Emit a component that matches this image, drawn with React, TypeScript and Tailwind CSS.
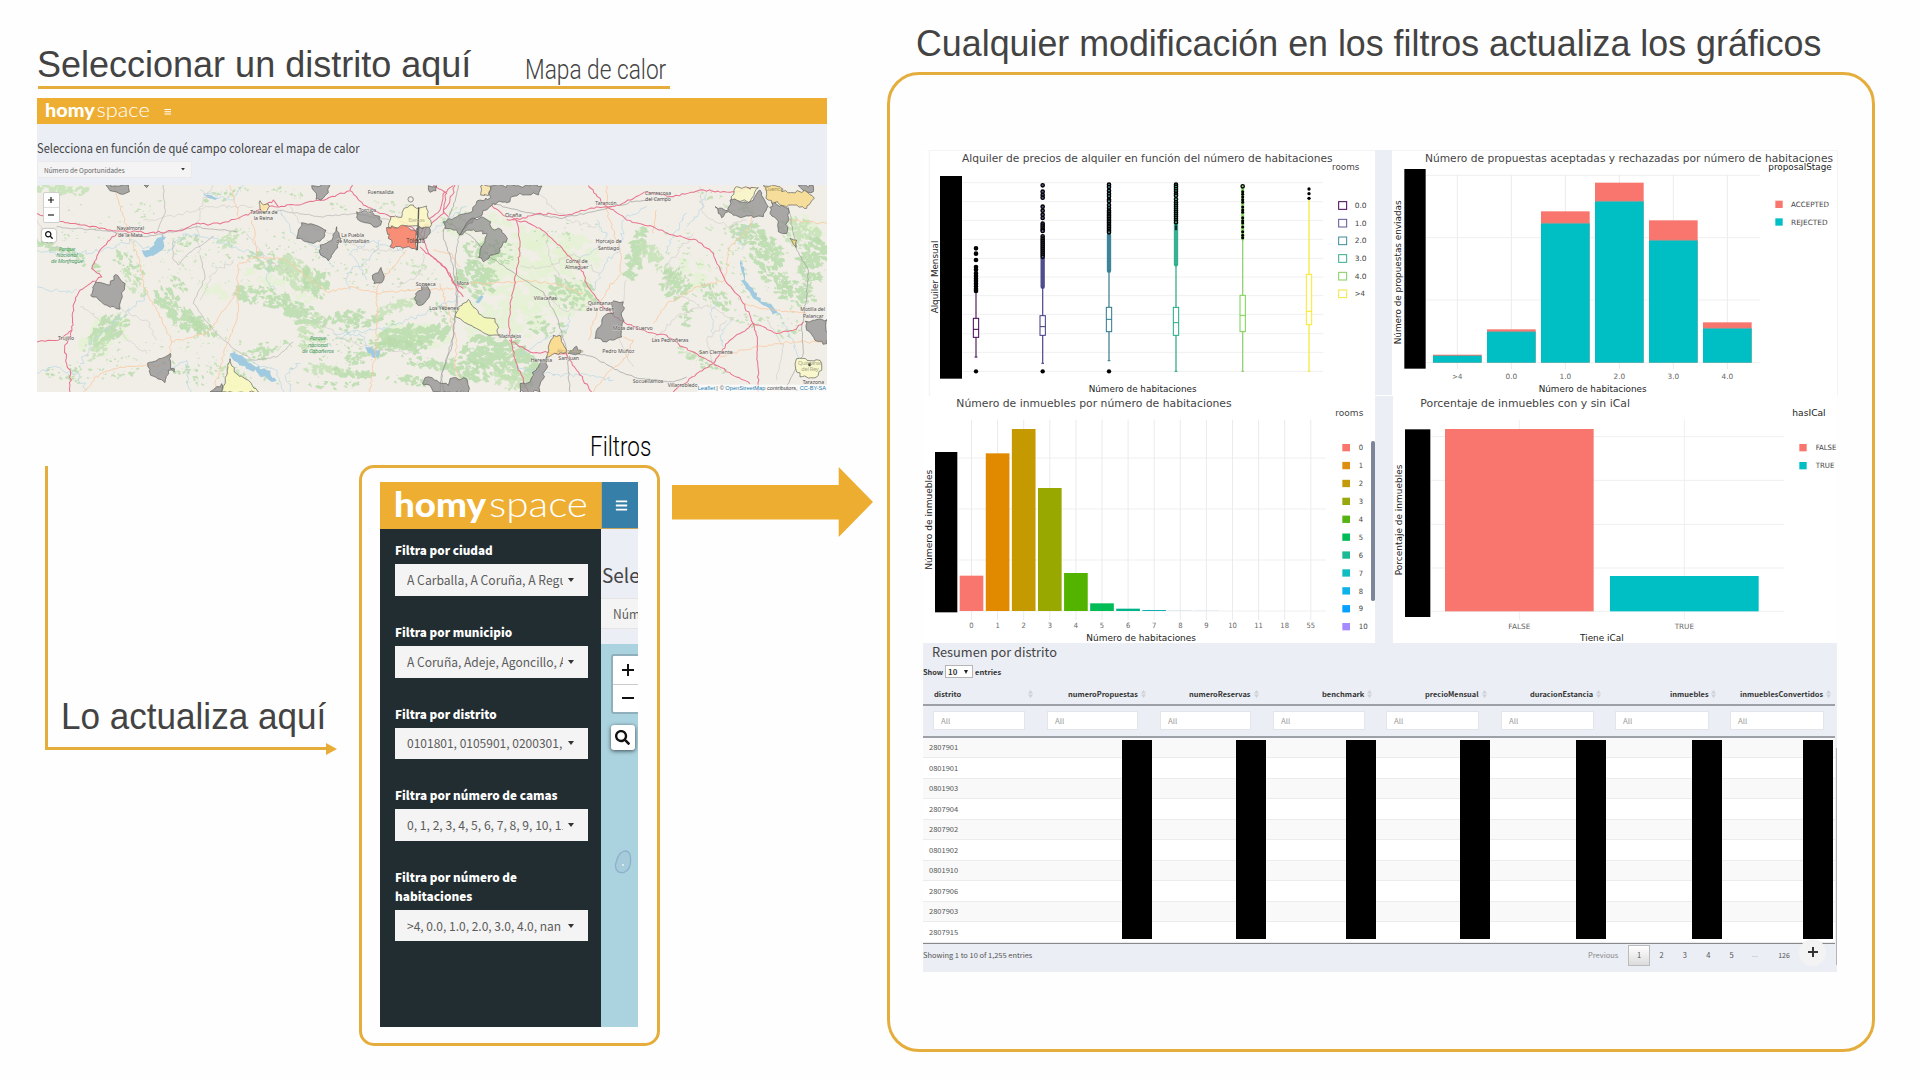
import { useLayoutEffect, useRef, useState, type ReactNode } from "react";
import { FaBars, FaSearch } from "react-icons/fa";

/* ---------- text that is condensed or stretched to a given width ---------- */
function Fit({ w, className = "", children }: { w: number; className?: string; children: ReactNode }) {
  const ref = useRef<HTMLSpanElement>(null);
  const [scale, setScale] = useState(1);
  useLayoutEffect(() => {
    if (ref.current) setScale(w / ref.current.offsetWidth);
  }, [w]);
  return (
    <span className="block shrink-0 whitespace-nowrap" style={{ width: w }}>
      <span ref={ref} className={"inline-block origin-left " + className} style={{ transform: `scaleX(${scale})` }}>
        {children}
      </span>
    </span>
  );
}

const SRC = "font-['Noto_Sans_CJK_SC','Noto_Sans',sans-serif]";

/* ---------- map helpers ---------- */
function rng(seed: number) {
  let s = seed * 9301 + 49297;
  return () => {
    s = (s * 16807 + 12345) % 2147483647;
    return s / 2147483647;
  };
}

function rough(str: string, amp: number, seed: number, closed: boolean, dx = 0) {
  const r = rng(seed);
  const pts = str.split(" ").map((p) => p.split(",").map(Number));
  const out: string[] = [];
  const n = closed ? pts.length : pts.length - 1;
  for (let i = 0; i < n; i++) {
    const a = pts[i];
    const b = pts[(i + 1) % pts.length];
    const k = Math.max(1, Math.round(Math.hypot(b[0] - a[0], b[1] - a[1]) / 9));
    for (let j = 0; j < k; j++) {
      const t = j / k;
      const jx = j ? (r() - 0.5) * amp : 0;
      const jy = j ? (r() - 0.5) * amp : 0;
      out.push(`${(a[0] + (b[0] - a[0]) * t + jx + dx).toFixed(1)},${(a[1] + (b[1] - a[1]) * t + jy).toFixed(1)}`);
    }
  }
  if (!closed) out.push(`${pts[pts.length - 1][0] + dx},${pts[pts.length - 1][1]}`);
  return "M" + out.join("L") + (closed ? "Z" : "");
}

/* irregular patches scattered inside a tilted ellipse */
function patches(cx: number, cy: number, rx: number, ry: number, deg: number, count: number, size: number, seed: number) {
  const r = rng(seed);
  const a = (deg * Math.PI) / 180;
  let d = "";
  for (let i = 0; i < count; i++) {
    const t = r() * Math.PI * 2;
    const q = Math.pow(r(), 0.6);
    const ex = Math.cos(t) * rx * q;
    const ey = Math.sin(t) * ry * q;
    const x = cx + ex * Math.cos(a) - ey * Math.sin(a);
    const y = cy + ex * Math.sin(a) + ey * Math.cos(a);
    const s = size * (0.2 + r() * 0.95);
    const tilt = a + (r() - 0.5) * 1.6;
    const pts: string[] = [];
    const m = 11;
    for (let k = 0; k < m; k++) {
      const u = (k / m) * Math.PI * 2;
      const rad = s * (0.45 + r() * 0.9);
      const px = Math.cos(u) * rad * 1.25;
      const py = Math.sin(u) * rad * 0.7;
      pts.push(`${(x + px * Math.cos(tilt) - py * Math.sin(tilt)).toFixed(1)},${(y + px * Math.sin(tilt) + py * Math.cos(tilt)).toFixed(1)}`);
    }
    d += "M" + pts.join("L") + "Z";
  }
  return d;
}

const FOREST: number[][] = [
  [190, 510, 80, 14, 5, 26, 12], [150, 680, 60, 9, 18, 18, 10], [250, 720, 60, 12, 30, 16, 9], [390, 735, 60, 22, 40, 24, 9],
  [400, 790, 50, 20, 45, 22, 9], [530, 870, 90, 28, 45, 48, 13], [600, 910, 50, 18, 35, 22, 13], [330, 925, 60, 30, -35, 46, 13],
  [290, 980, 50, 24, -40, 24, 11], [530, 790, 50, 14, 30, 12, 8], [200, 1060, 70, 22, 0, 14, 7], [560, 660, 40, 14, -20, 12, 8],
  [690, 660, 60, 18, -25, 22, 9], [690, 520, 70, 14, -15, 16, 8], [860, 520, 60, 14, 10, 10, 6], [800, 725, 70, 22, 15, 26, 11],
  [890, 760, 60, 34, 40, 44, 15], [950, 790, 50, 26, 55, 28, 14], [790, 830, 80, 24, 10, 44, 13], [900, 880, 60, 26, 20, 40, 12],
  [940, 940, 40, 50, 20, 36, 11], [800, 990, 80, 20, -20, 26, 10], [1030, 890, 60, 16, -15, 28, 12], [1090, 905, 50, 14, -8, 22, 11],
  [1190, 860, 70, 14, -20, 30, 12], [1240, 945, 100, 24, -5, 60, 17], [1200, 975, 80, 16, 5, 30, 13], [1090, 1010, 70, 16, -15, 30, 11],
  [960, 1045, 60, 12, 5, 22, 12], [1060, 1060, 60, 12, 8, 22, 12], [1290, 1030, 70, 14, 5, 26, 11], [1220, 1080, 60, 12, 5, 18, 10],
  [690, 1070, 60, 22, 20, 20, 9], [370, 1060, 60, 10, -10, 10, 8], [560, 1060, 70, 20, 30, 14, 7], [1000, 1095, 80, 10, 0, 14, 8],
  [1240, 740, 40, 18, 20, 12, 7], [1330, 880, 40, 24, 30, 16, 9], [1430, 780, 60, 46, 20, 46, 14], [1440, 700, 50, 34, 10, 26, 12],
  [1350, 600, 60, 22, -30, 12, 8], [1510, 700, 50, 34, 10, 18, 9], [1500, 1010, 100, 50, 15, 80, 17], [1400, 1050, 60, 30, 20, 34, 13],
  [1540, 1070, 60, 30, 0, 34, 13], [1720, 820, 70, 40, 20, 40, 12], [1640, 920, 60, 26, 10, 18, 10], [1910, 700, 20, 70, 15, 60, 13],
  [1970, 720, 18, 60, -40, 36, 12], [2030, 790, 40, 40, -45, 48, 11], [2150, 830, 50, 18, 40, 22, 10], [2060, 880, 16, 40, 10, 16, 9],
  [2060, 1000, 40, 20, 10, 12, 9], [2120, 1030, 60, 14, 20, 18, 9], [2240, 640, 50, 26, 10, 34, 12], [2300, 700, 50, 40, 40, 50, 13],
  [2400, 640, 60, 36, 20, 50, 12], [2440, 720, 40, 60, 10, 54, 13], [2330, 780, 60, 30, 40, 34, 11], [2400, 820, 60, 30, 10, 32, 11],
  [2210, 560, 50, 16, 20, 14, 8], [2120, 530, 40, 14, 0, 8, 7], [2360, 930, 40, 20, 0, 14, 8], [2250, 900, 40, 18, 0, 10, 7],
  [1180, 560, 60, 14, 10, 10, 7], [1010, 560, 30, 10, 10, 6, 6], [440, 560, 60, 20, 0, 10, 6], [740, 1060, 200, 40, 0, 30, 6], [560, 740, 200, 60, 20, 50, 5],
  [900, 700, 300, 60, 5, 60, 5], [1150, 760, 150, 60, 0, 30, 5], [300, 620, 150, 60, 0, 24, 5], [2200, 760, 240, 120, 20, 110, 6], [1700, 640, 100, 40, 0, 16, 5],
  [330, 1020, 160, 40, -20, 34, 5], [1080, 960, 200, 60, 0, 60, 6], [620, 960, 140, 60, 30, 34, 6],
];
const FIELDS: number[][] = [
  [1600, 760, 190, 120, 20, 170, 19], [1500, 900, 140, 60, 0, 80, 17], [1700, 700, 120, 60, 0, 60, 17], [1450, 620, 130, 50, 10, 34, 14],
  [640, 810, 40, 14, 30, 8, 18], [2080, 760, 60, 50, 30, 20, 13], [2420, 620, 60, 40, 0, 20, 13], [1240, 950, 110, 40, 0, 40, 16],
  [850, 800, 120, 60, 20, 40, 15], [310, 950, 80, 50, -30, 26, 15],
];

const RED_ROADS = [
  "111,580 160,600 240,615 330,630 450,638 545,632 585,612 660,612 720,592 800,560 905,553 960,540 1050,512 1058,495",
  "1050,512 1090,555 1140,580 1190,592 1240,625 1270,655 1285,700 1335,740 1362,790 1390,830",
  "350,640 300,690 275,745 305,770 240,810 222,850 216,930 194,985 200,1030 212,1060 210,1115",
  "111,965 175,960 215,930", "780,578 800,552 820,540 835,560",
  "1365,495 1350,540 1330,580 1280,620 1270,655",
  "1300,495 1340,520 1330,570 1345,590",
];
const RED_ROADS_E = [
  "100,497 70,520 60,570 20,610 0,640",
  "215,555 260,590 300,598 360,580 440,585 530,560 600,555 680,515 760,530 840,510 930,517 1000,502",
  "505,497 550,550 620,600 700,620 760,645 830,660 880,700 915,780 960,830 1000,910 1070,940 1120,930 1150,905",
  "260,598 320,605 380,640 430,690 480,735 500,790 540,850 600,900 680,935 740,945 790,980 880,1030 990,1090",
  "290,600 300,680 290,760 270,850 268,945 290,1030 310,1080 325,1115",
  "268,960 330,995 440,1000 470,1050 515,1115",
  "1000,910 930,960 880,1030 830,1060 760,1115",
  "1000,910 1012,960 1015,1115",
  "0,680 50,720 90,760 100,790 130,805",
];
const ORANGE_ROADS = [
  "345,495 362,560 385,640 420,720 430,800 470,870 500,930 515,965 505,1010 480,1035 360,1040 300,1060 250,1115",
  "515,965 620,940 680,860 715,800 712,735 770,710 850,715 920,770 980,815 1060,800 1130,820 1220,810 1360,805",
  "690,495 710,560 720,600", "755,600 775,710", "1130,820 1130,920 1125,1010 1110,1115", "1300,690 1350,700 1380,740",
  "715,800 710,900 680,970 660,1050 640,1115", "1220,690 1190,730 1140,780 1130,820",
];
const ORANGE_ROADS_E = [
  "560,497 560,570 600,690 605,760 560,810 530,880 505,960", "130,790 220,790 320,780 400,790 490,820",
  "700,910 740,850 830,800 915,780 930,680 990,620 1000,560", "610,950 640,960 620,1010 560,1060 520,1115",
  "970,850 1060,870 1160,880", "900,1010 1000,980 1120,965 1221,965", "710,570 700,640", "1105,600 1160,605 1221,610",
  "60,790 80,860 110,960 105,1040 135,1115",
];
const GREY_ROADS = [
  "490,495 495,580 470,640", "640,650 560,705 535,735 518,715 520,660", "600,705 615,770 580,850 640,930 700,985 760,1020 830,1010 880,965",
  "830,570 960,590 1070,580 1170,600", "1260,610 1250,690", "170,620 300,630 440,650 590,620 710,635", "1378,640 1365,720 1375,800 1360,950 1325,1060 1330,1115",
];
const GREY_ROADS_E = [
  "115,495 100,560 75,610 70,650 100,740 110,840 95,980 65,1060 60,1115", "80,605 150,645 210,710 290,765 370,815 410,890 440,990 450,1115",
  "450,995 520,1010 600,1055 660,1075 760,1085 800,1070", "215,550 310,575 420,595 540,570 640,545 760,530", "1105,560 1130,690 1165,750 1160,830 1145,930 1150,1000 1120,1060 1095,1110",
];
const MINOR_ROADS = [
  "111,600 150,680 210,700", "640,495 600,560 590,620 600,700", "350,860 440,900 470,960", "740,640 800,720 880,760", "870,560 900,610 1000,640 1090,690 1210,690",
  "940,900 1040,960 1130,990 1250,1000", "240,860 330,920 440,1000", "1270,700 1260,760 1190,800", "700,720 640,760 600,840", "430,600 520,590 620,560 760,560",
  "1590,500 1640,540 1700,600 1790,620", "1560,740 1650,740 1720,700 1800,760", "1630,820 1690,870 1780,860", "1880,780 1860,870 1850,950 1900,1040",
  "1960,960 2040,880 2130,860 2200,900", "2080,640 2010,720 2000,800 2100,860", "2100,500 2110,580 2180,620 2240,600", "2180,900 2120,960 2150,1050", "2300,900 2350,980 2330,1080", "1640,640 1650,720 1700,800",
];
const RIVERS = [
  "111,690 200,705 310,690 400,660 450,690", "500,700 560,640 640,655 720,690 800,710", "810,720 800,780 830,810", "730,495 700,540 650,530 600,510",
  "111,800 180,815 230,810", "240,1030 300,940 400,860 440,820", "260,1110 230,1060 160,1040 111,1060", "470,1060 560,1020 570,1115", "700,1000 780,1040 830,1050 850,1115",
  "1000,940 1120,930 1250,890 1380,830", "1115,1000 1080,940 1010,955", "1290,640 1350,590 1400,560", "1100,780 1050,700 1120,660 1210,690", "1050,810 1040,760 1110,720 1140,660",
  "840,570 880,640 950,680 1000,740", "870,1115 860,1060 900,1030",
];
const RIVERS_E = [
  "520,810 560,720 600,690 610,600 680,560", "530,600 560,650 520,690 460,720", "300,1000 390,950 440,930 450,880", "280,1040 370,1060 480,1065 580,1080",
  "965,690 955,640 1000,600", "1090,905 1130,1000 1140,1060", "880,940 870,880 890,840", "800,620 850,560 860,520", "910,980 905,930 940,900", "740,700 760,640 800,580",
];
const GREY_AREAS = [
  "318,495 385,495 388,515 370,523 350,516 330,512", "935,497 990,497 985,518 962,540 948,538 945,515",
  "1070,575 1095,572 1120,580 1140,592 1142,615 1120,620 1095,608 1075,600", "905,608 945,615 978,630 972,652 940,670 890,655",
  "1010,620 1022,655 1005,690 985,722 962,705 960,675 985,665 1000,650", "1143,742 1153,770 1145,788 1122,790 1117,765 1135,758",
  "1280,790 1290,812 1280,840 1255,856 1243,835 1255,812", "347,763 375,790 367,830 360,867 320,855 272,825 287,785 330,795",
  "512,1000 512,1035 523,1055 505,1050 495,1087 452,1065 443,1028 478,1015",
  "1275,1072 1310,1080 1345,1095 1350,1075 1400,1075 1405,1115 1300,1115 1290,1095 1268,1090", "1250,625 1290,615 1290,640 1262,660 1250,645",
  "1285,497 1310,497 1308,512 1290,517", "665,1090 665,1115 630,1115", "432,495 446,495 440,503",
];
const GREY_AREAS_E = [
  "70,605 100,595 150,578 180,540 212,533 212,498 366,498 355,525 300,520 275,530 270,545 220,550 200,570 170,592 120,645 100,630 75,625",
  "150,598 190,592 212,605 215,625 245,630 262,655 235,700 210,705 190,725 176,712 180,690 195,655 200,640 160,628 118,645",
  "575,850 580,842 610,845 605,950 560,965 525,955 540,920 555,885 580,880", "445,1000 470,978 474,990 483,990 480,1000",
  "380,1010 380,1045 362,1085 360,1115 300,1115 300,1090 330,1085 350,1045", "885,560 925,570 930,540 990,545 1020,510 1045,560 1030,590 985,588 960,592 925,575 905,593 895,580",
  "1055,545 1105,565 1100,640 1075,635 1072,600 1050,580", "1155,903 1221,898 1221,970 1185,960 1160,930", "1135,497 1180,497 1180,515 1150,512",
];
const COLOR_AREAS: [string, string, number][] = [
  ["1212,565 1240,555 1250,565 1280,558 1285,595 1292,600 1290,622 1225,618 1165,625 1172,590 1205,592", "#fbf6c4", 0],
  ["1160,622 1220,618 1250,635 1250,690 1215,682 1170,680 1175,660 1165,655", "#f9836a", 0],
  ["690,1015 710,1060 745,1080 775,1115 665,1115 680,1065", "#f9f8bf", 0],
  ["780,542 808,560 795,580 785,575", "#fae7a8", 0],
  ["945,503 1015,503 990,545 935,540", "#f8f5c6", 1260],
  ["1030,497 1080,500 1085,515 1160,515 1183,535 1160,565 1120,555 1100,560 1045,540", "#f6dc91", 1260],
  ["182,498 212,498 205,527 182,525", "#f8e3ae", 1260],
  ["105,890 115,860 145,838 185,885 225,895 238,948 215,945 170,925", "#f3f6b5", 1260],
  ["400,945 420,945 440,995 380,1010 385,985", "#fbd98a", 1260],
  ["1130,1015 1200,1020 1205,1030 1205,1050 1190,1070 1140,1070 1127,1045", "#f8f8c9", 1260],
  ["1110,655 1130,660 1128,682", "#f4d583", 1260],
];
const TOWNS: [number, number, string, number][] = [
  [1142, 522, "Fuensalida", 78], [792, 581, "Talavera de", 82], [790, 600, "la Reina", 58], [1102, 576, "Torrijos", 52], [391, 630, "Navalmoral", 82],
  [391, 650, "de la Mata", 74], [1058, 651, "La Puebla", 68], [1058, 670, "de Montalbán", 100], [1277, 797, "Sonseca", 60], [1388, 795, "Mora", 36],
  [1332, 869, "Los Yébenes", 88], [198, 960, "Trujillo", 48], [1540, 592, "Ocaña", 50], [1818, 555, "Tarancón", 64], [1974, 525, "Carrascosa", 78],
  [1974, 544, "del Campo", 78], [1826, 670, "Horcajo de", 78], [1826, 690, "Santiago", 64], [1730, 729, "Corral de", 66], [1730, 748, "Almaguer", 70],
  [1636, 838, "Villacañas", 70], [1801, 855, "Quintanar", 76], [1801, 873, "de la Orden", 84], [1898, 929, "Mota del Cuervo", 120], [2010, 966, "Las Pedroñeras", 110],
  [1530, 953, "Madridejos", 66], [1624, 1025, "Herencia", 64], [1706, 1020, "San Juan", 62], [1855, 998, "Pedro Muñoz", 96], [2148, 1000, "San Clemente", 100],
  [1944, 1088, "Socuéllamos", 92], [2048, 1099, "Villarrobledo", 90], [2438, 873, "Motilla del", 74], [2440, 892, "Palancar", 62], [2440, 1090, "Tarazona", 64],
];

function HeatMap() {
  return (
    <svg viewBox="111 495 2370 620" preserveAspectRatio="none" className="block h-full w-full">
      <rect x="111" y="495" width="2370" height="620" fill="#f1eee8" />
      {FIELDS.map((f, i) => (
        <path key={i} d={patches(f[0], f[1], f[2], f[3], f[4], f[5], f[6], i + 400)} fill="#e2f3cf" opacity="0.65" />
      ))}
      {FOREST.map((f, i) => (
        <path key={i} d={patches(f[0], f[1], f[2] * 1.1, f[3] * 1.2, f[4], Math.round(f[5] * 1.9), f[6] * 0.75, i + 7)} fill={i % 4 === 0 ? "#c4e2b5" : "#b9dcab"} opacity="0.85" />
      ))}
      <g fill="none" stroke="#b4d6e6" strokeWidth="2">
        {RIVERS.map((r, i) => <path key={i} d={rough(r, 14, i + 3, false)} />)}
        {RIVERS_E.map((r, i) => <path key={i} d={rough(r, 14, i + 31, false, 1260)} />)}
      </g>
      <g fill="#9fcadf">
        <path d={rough("425,690 450,690 468,660 488,640 498,650 488,690 460,708 435,710", 12, 5, true)} />
        <path d={rough("690,1000 720,1005 760,1035 800,1050 830,1080 815,1085 770,1055 720,1035 700,1020", 16, 6, true)} />
        <path d={rough("1095,980 1140,990 1135,1010 1115,1010", 8, 9, true)} />
        <path d={rough("962,720 975,770 1010,830 1050,850 1080,880 1085,895 1040,860 1000,835 970,790", 12, 8, true, 1260)} />
        <path d={rough("610,520 640,530 655,535 645,540 620,530", 6, 8, true)} />
        <path d={rough("165,845 185,825 190,830 175,850", 4, 8, true, 1260)} />
      </g>
      <g fill="none" stroke="#cfcbc8" strokeWidth="1.8">
        {MINOR_ROADS.map((r, i) => <path key={i} d={rough(r, 12, i + 150, false)} />)}
      </g>
      <g fill="none" stroke="#fac9a0" strokeWidth="2.5">
        {ORANGE_ROADS.map((r, i) => <path key={i} d={rough(r, 8, i + 50, false)} />)}
        {ORANGE_ROADS_E.map((r, i) => <path key={i} d={rough(r, 8, i + 60, false, 1260)} />)}
      </g>
      <g fill="none" stroke="#9b9a98" strokeWidth="2">
        {GREY_ROADS.map((r, i) => <path key={i} d={rough(r, 5, i + 80, false)} opacity={i < 4 ? 0.7 : 0.9} />)}
        {GREY_ROADS_E.map((r, i) => <path key={i} d={rough(r, 4, i + 90, false, 1260)} />)}
      </g>
      <g fill="none" stroke="#e8728c" strokeWidth="3">
        {RED_ROADS.map((r, i) => <path key={i} d={rough(r, 7, i + 100, false)} />)}
        {RED_ROADS_E.map((r, i) => <path key={i} d={rough(r, 6, i + 120, false, 1260)} />)}
      </g>
      <g stroke="#5c5c58" strokeWidth="2">
        {GREY_AREAS.map((p, i) => <path key={i} d={rough(p, 9, i + 200, true)} fill="#8f8f8f" fillOpacity="0.75" />)}
        {GREY_AREAS_E.map((p, i) => <path key={i} d={rough(p, 10, i + 220, true, 1260)} fill="#8f8f8f" fillOpacity="0.75" />)}
        {COLOR_AREAS.map(([p, c, dx], i) => <path key={i} d={rough(p, 9, i + 240, true, dx)} fill={c} fillOpacity="0.9" strokeWidth="2" />)}
        <circle cx="1232" cy="538" r="8" fill="none" strokeWidth="2" />
        <circle cx="2429" cy="1033" r="4" fill="#222" />
        <path d="M1256 562 L1252 690" fill="none" strokeWidth="4" />
      </g>
      <g fontFamily="'Noto Sans', sans-serif" fontSize="17" fill="#4f4c4a" textAnchor="middle">
        {TOWNS.map(([x, y, t, w]) => (
          <text key={t} x={x} y={y} textLength={w} lengthAdjust="spacingAndGlyphs" stroke="#f5f2ee" strokeWidth="3" strokeOpacity="0.6" paintOrder="stroke">{t}</text>
        ))}
        <text x="1247" y="669" fontSize="21" textLength="56" lengthAdjust="spacingAndGlyphs">Toledo</text>
        <text x="1250" y="606" fill="#bdb593" textLength="50">Bargas</text>
        <text x="1710" y="998" fill="#b5a478" textLength="80">Alcázar de</text>
        <text x="2430" y="1034" fill="#aaa789" textLength="72">Quintanar</text>
        <text x="2430" y="1052" fill="#aaa789" textLength="52">del Rey</text>
        <text x="2322" y="512" fill="#a38f62" textLength="56">Cuenca</text>
        <g fontStyle="italic" fill="#4c9c68" fontSize="17">
          <text x="201" y="694" textLength="50">Parque</text>
          <text x="201" y="712" textLength="64">Nacional</text>
          <text x="201" y="730" textLength="96">de Monfragüe</text>
          <text x="954" y="960" textLength="50">Parque</text>
          <text x="954" y="979" textLength="60">nacional</text>
          <text x="954" y="997" textLength="96">de Cabañeros</text>
        </g>
      </g>
      <rect x="2092" y="1093" width="389" height="22" fill="#fff" fillOpacity="0.7" />
      <g fontFamily="'Liberation Sans', sans-serif" fontSize="17" fill="#1b7fb5">
        <text x="2093" y="1109" textLength="52" lengthAdjust="spacingAndGlyphs">Leaflet</text>
        <text x="2149" y="1109" fill="#444" textLength="23">| ©</text>
        <text x="2176" y="1109" textLength="120" lengthAdjust="spacingAndGlyphs">OpenStreetMap</text>
        <text x="2301" y="1109" fill="#444" textLength="92" lengthAdjust="spacingAndGlyphs">contributors,</text>
        <text x="2399" y="1109" textLength="79" lengthAdjust="spacingAndGlyphs">CC-BY-SA</text>
      </g>
    </svg>
  );
}

/* ---------- logo ---------- */
function Logo({ className }: { className: string }) {
  return (
    <svg viewBox="-2 -4 200 42" className={className} fill="#fff" fontFamily="Lato, sans-serif">
      <text x="0" y="25" fontSize="33.5" fontWeight="900" textLength="92" lengthAdjust="spacingAndGlyphs">homy</text>
      <text x="95" y="25" fontSize="35" fontWeight="300" textLength="99" lengthAdjust="spacingAndGlyphs">space</text>
    </svg>
  );
}

/* ---------- charts: every unit is a third of a pixel ---------- */
const DV = "'DejaVu Sans', sans-serif";

function Txt({ x, y, w, s, c = "#444", a = "start", children }: { x: number; y: number; w: number; s: number; c?: string; a?: "start" | "middle"; children: string }) {
  return (
    <text x={x} y={y} fontSize={s} fill={c} textAnchor={a} textLength={w} lengthAdjust="spacingAndGlyphs">{children}</text>
  );
}
function VTxt({ x, y, w, s, children }: { x: number; y: number; w: number; s: number; children: string }) {
  return (
    <text transform={`translate(${x} ${y}) rotate(-90)`} fontSize={s} fill="#222" textAnchor="middle" textLength={w} lengthAdjust="spacingAndGlyphs">{children}</text>
  );
}

type Box = { x: number; c: string; dark: string; hi: number; q3: number; m: number; q1: number; lo: number; thick?: [number, number]; dots: number[]; low?: boolean };
const range = (a: number, b: number, step: number) => Array.from({ length: Math.floor((b - a) / step) + 1 }, (_, i) => a + i * step);
const BOXES: Box[] = [
  { x: 288, c: "#66396f", dark: "#440154", hi: 690, q3: 775, m: 808, q1: 832, lo: 891, dots: [565, 581, 600, 621, 629, 640, 648, 656, 663, 671, 679, 687, 693], low: true },
  { x: 488, c: "#5a5796", dark: "#3c3a80", hi: 680, q3: 767, m: 800, q1: 826, lo: 910, thick: [595, 680], dots: [376, 395, 405, 413, 440, 452, 464, 474, 491, 497, 503, 509, 513, 529, ...range(536, 594, 6)], low: true },
  { x: 687, c: "#4a8796", dark: "#2a788e", hi: 630, q3: 742, m: 778, q1: 815, lo: 902, thick: [525, 632], dots: [374, 381, 392, 401, 409, 419, 424, 435, 444, ...range(452, 520, 5)], low: true },
  { x: 888, c: "#3fae8c", dark: "#22a884", hi: 612, q3: 742, m: 788, q1: 826, lo: 934, thick: [490, 613], dots: [374, 380, 387, 394, 401, 407, 418, ...range(427, 490, 6)] },
  { x: 1088, c: "#98d077", dark: "#7ad151", hi: 535, q3: 706, m: 766, q1: 815, lo: 934, thick: [385, 537], dots: [379] },
  { x: 1287, c: "#f4e94d", dark: "#fde725", hi: 420, q3: 643, m: 754, q1: 794, lo: 934, dots: [] },
];
const ROOM_LEGEND = [["0.0", "#440154"], ["1.0", "#5a5796"], ["2.0", "#3f8a9a"], ["3.0", "#35ac8b"], ["4.0", "#86cc5f"], [">4", "#f4e63a"]];

function RentChart() {
  return (
    <svg viewBox="129 270 1356 738" className="block h-full w-[452px] shrink-0 bg-white" fontFamily={DV}>
      <path d="M148 1008V271H1485" fill="none" stroke="#e7ebee" strokeWidth="2" />
      {[368, 425, 481, 538, 595, 651, 707, 763, 821, 877, 934].map((y) => <path key={y} d={`M247 ${y}H1330`} stroke="#f0f0f0" strokeWidth="3" />)}
      <rect x="180" y="348" width="66" height="608" fill="#000" />
      {BOXES.map((b) => (
        <g key={b.x} stroke={b.c} strokeWidth="4" fill="none">
          <path d={`M${b.x} ${b.hi}V${b.q3}M${b.x} ${b.q1}V${b.lo}M${b.x - 4} ${b.lo}h8`} />
          <rect x={b.x - 8} y={b.q3} width="16" height={b.q1 - b.q3} fill="#fff" stroke={b.dark} strokeWidth="3" />
          <path d={`M${b.x - 8} ${b.m}h16`} stroke={b.dark} strokeWidth="3" />
          {b.thick && <path d={`M${b.x} ${b.thick[0]}V${b.thick[1]}`} strokeWidth={b.x > 1000 ? 9 : 13} strokeLinecap="round" stroke={b.dark} opacity="0.9" />}
          {b.dots.map((y) => <circle key={y} cx={b.x} cy={y} r="5" stroke="#000" strokeWidth="4" fill={b.x === 288 ? "#000" : b.c} />)}
          {b.low && <circle cx={b.x} cy="934" r="6.5" fill="#000" stroke="none" />}
        </g>
      ))}
      {[395, 403, 411, 419, 427, 441, 450, 457, 473, 482, 489, 501, 515, 526, 533].map((y) => <circle key={y} cx="1088" cy={y} r="4.5" fill="#000" />)}
      {[500, 507].map((y) => <circle key={y} cx="888" cy={y} r="4" fill="#123" />)}
      {[387, 401, 415].map((y) => <circle key={y} cx="1287" cy={y} r="5" fill="#000" />)}
      <Txt x={246} y={307} w={1112} s={32}>Alquiler de precios de alquiler en función del número de habitaciones</Txt>
      <Txt x={1356} y={329} w={82} s={26}>rooms</Txt>
      {ROOM_LEGEND.map(([t, c], i) => (
        <g key={t}>
          <rect x="1376" y={425 + i * 53} width="24" height="23" fill="#fff" stroke={c} strokeWidth="3" />
          <Txt x={1424} y={444 + i * 53} w={t === ">4" ? 31 : 36} s={22}>{t}</Txt>
        </g>
      ))}
      <VTxt x={174} y={651} w={218} s={26}>Alquiler Mensual</VTxt>
      <Txt x={626} y={996} w={324} s={26} c="#222">Número de habitaciones</Txt>
    </svg>
  );
}

const PROPOSALS: [string, number, number, number, number][] = [
  [">4", 262, 884, 887, 30], ["0.0", 424, 808, 815, 35], ["1.0", 586, 454, 490, 35], ["2.0", 748, 368, 424, 35], ["3.0", 910, 481, 541, 35], ["4.0", 1072, 787, 805, 35],
];

function ProposalChart() {
  return (
    <svg viewBox="66 270 1338 738" className="block h-full w-[446px] shrink-0 bg-white" fontFamily={DV}>
      <path d="M66 271H1403V1008" fill="none" stroke="#e9ecef" strokeWidth="2" />
      {[346, 533, 720, 908].map((y) => <path key={y} d={`M168 ${y}H1170`} stroke="#efefef" strokeWidth="3" />)}
      {PROPOSALS.map(([t, x, top, mid, w]) => (
        <g key={t}>
          <path d={`M${x} 344V928`} stroke="#ebebeb" strokeWidth="3" />
          <rect x={x - 73} y={top} width="146" height={908 - top} fill="#f8766d" />
          <rect x={x - 73} y={mid} width="146" height={908 - mid} fill="#00bfc4" />
          {mid - top > 5 && <path d={`M${x - 73} ${mid}h146`} stroke="#8fa0a0" strokeWidth="2" />}
          <Txt x={x} y={958} w={w} s={22} c="#666" a="middle">{t}</Txt>
        </g>
      ))}
      <rect x="103" y="327" width="64" height="599" fill="#000" />
      <Txt x={165} y={307} w={1224} s={32}>Número de propuestas aceptadas y rechazadas por número de habitaciones</Txt>
      <Txt x={1195} y={329} w={190} s={26} c="#222">proposalStage</Txt>
      <rect x="1216" y="422" width="22" height="22" fill="#f8766d" />
      <Txt x={1263} y={441} w={114} s={22}>ACCEPTED</Txt>
      <rect x="1216" y="475" width="22" height="22" fill="#00bfc4" />
      <Txt x={1263} y={494} w={110} s={22}>REJECTED</Txt>
      <VTxt x={94} y={637} w={432} s={26}>Número de propuestas enviadas</VTxt>
      <Txt x={506} y={996} w={324} s={26} c="#222">Número de habitaciones</Txt>
    </svg>
  );
}

const ROOMS: [string, number, string][] = [
  ["0", 557, "#f8766d"], ["1", 190, "#e18a00"], ["2", 117, "#c49a00"], ["3", 294, "#99a800"], ["4", 549, "#53b400"], ["5", 640, "#00bc56"], ["6", 656, "#00b48a"],
  ["7", 660, "#10b0b0"], ["8", 662, "#b8dbe8"], ["9", 662, "#c9e0f2"], ["10", 663, "#eee"], ["11", 663, "#eee"], ["18", 663, "#eee"], ["55", 663, "#eee"],
];
const ROOM_KEYS = ["#f8766d", "#dd8d10", "#c49a0a", "#99a80c", "#53b414", "#00bc56", "#1cba94", "#12bdc2", "#0cb3e8", "#06a1ff", "#a58aff"];

function RoomsChart() {
  return (
    <svg viewBox="129 18 1356 741" className="block h-full w-[452px] shrink-0 bg-white" fontFamily={DV}>
      {[204, 357, 510, 663].map((y) => <path key={y} d={`M236 ${y}H1338`} stroke="#efefef" strokeWidth="3" />)}
      {ROOMS.map(([t, top, c], i) => {
        const x = 274.5 + i * 78.3;
        return (
          <g key={t}>
            <path d={`M${x} 89V690`} stroke="#ebebeb" strokeWidth="3" />
            <rect x={x - 35.5} y={top} width="71" height={663 - top} fill={c} />
            <Txt x={x} y={714} w={t.length * 13} s={22} c="#666" a="middle">{t}</Txt>
          </g>
        );
      })}
      <rect x="165" y="186" width="67" height="481" fill="#000" />
      <Txt x={229} y={52} w={826} s={32}>Número de inmuebles por número de habitaciones</Txt>
      <Txt x={1366} y={78} w={84} s={26}>rooms</Txt>
      {ROOM_KEYS.map((c, i) => (
        <g key={c}>
          <rect x="1387" y={162 + i * 53.7} width="23" height="22" fill={c} />
          <Txt x={1436} y={181 + i * 53.7} w={i === 10 ? 27 : 13} s={22}>{String(i)}</Txt>
        </g>
      ))}
      <rect x="1473" y="153" width="12" height="480" rx="5" fill="#7b869b" />
      <VTxt x={155} y={389} w={300} s={26}>Número de inmuebles</VTxt>
      <Txt x={619} y={752} w={329} s={26} c="#222">Número de habitaciones</Txt>
    </svg>
  );
}

function ICalChart() {
  return (
    <svg viewBox="69 18 1332 741" className="block h-full w-[444px] shrink-0 bg-white" fontFamily={DV}>
      {[140, 271, 403, 534, 664].map((y) => <path key={y} d={`M184 ${y}H1242`} stroke="#efefef" strokeWidth="3" />)}
      <path d="M448 89V690M943 89V690" stroke="#efefef" strokeWidth="3" />
      <rect x="225" y="117" width="446" height="547" fill="#f8766d" />
      <rect x="720" y="558" width="446" height="106" fill="#00bfc4" />
      <rect x="105" y="118" width="76" height="563" fill="#000" />
      <Txt x={151} y={52} w={629} s={32}>Porcentaje de inmuebles con y sin iCal</Txt>
      <Txt x={1267} y={78} w={100} s={26} c="#222">hasICal</Txt>
      <rect x="1288" y="162" width="22" height="22" fill="#f8766d" />
      <Txt x={1337} y={181} w={62} s={22}>FALSE</Txt>
      <rect x="1288" y="216" width="22" height="22" fill="#00bfc4" />
      <Txt x={1337} y={235} w={56} s={22}>TRUE</Txt>
      <Txt x={448} y={716} w={66} s={22} c="#666" a="middle">FALSE</Txt>
      <Txt x={943} y={716} w={58} s={22} c="#666" a="middle">TRUE</Txt>
      <VTxt x={97} y={390} w={332} s={26}>Porcentaje de inmuebles</VTxt>
      <Txt x={630} y={752} w={131} s={26} c="#222">Tiene iCal</Txt>
    </svg>
  );
}

/* ---------- summary table ---------- */
const COLS = "grid w-[912px] grid-cols-[113.5px_113px_113px_113.5px_114.5px_114.5px_115px_115px]";
const HEADERS: [string, number][] = [
  ["distrito", 27], ["numeroPropuestas", 70], ["numeroReservas", 61.5], ["benchmark", 42], ["precioMensual", 54], ["duracionEstancia", 63.5], ["inmuebles", 38.5], ["inmueblesConvertidos", 83],
];
const DISTRICTS = ["2807901", "0801901", "0801903", "2807904", "2807902", "0801902", "0801910", "2807906", "2807903", "2807915"];
const MASKS = ["left-[198.5px]", "left-[312.5px]", "left-[423px]", "left-[536.5px]", "left-[653px]", "left-[768.5px]", "left-[879.5px]"];

function SortMark() {
  return (
    <svg viewBox="0 0 5 8" className="h-[8px] w-[5px]" fill="#cfd3d9">
      <path d="M2.5 0L5 3.4H0zM2.5 8L0 4.6h5z" />
    </svg>
  );
}

function Summary() {
  return (
    <section className={"h-[329px] w-[914px] bg-[#ebeef4] text-[#555] " + SRC}>
      <div className="h-[17px] pl-[9px] text-[12.5px] leading-[18px] text-[#444]"><Fit w={125}>Resumen por distrito</Fit></div>
      <div className="flex h-[23.5px] items-center text-[7px] font-bold leading-[10px] text-[#333]">
        <Fit w={20}>Show</Fit>
        <div className="ml-[2px] flex h-[13px] w-[28px] items-center justify-between border border-[#b5b5b5] bg-white px-[2px]">
          <Fit w={9}>10</Fit>
          <svg viewBox="0 0 4 4" className="mr-[2px] h-[4px] w-[4px]"><path d="M0 0h4L2 4z" fill="#222" /></svg>
        </div>
        <div className="ml-[1.5px]"><Fit w={26}>entries</Fit></div>
      </div>
      <div className={COLS + " h-[20px] items-center text-[7px] font-bold leading-[10px] text-[#333]"}>
        {HEADERS.map(([t, w], i) => (
          <div key={t} className={i === 0 ? "flex items-center justify-between pl-[10.5px] pr-[4px]" : "flex items-center justify-end gap-[3px] pr-[4px]"}>
            <Fit w={w}>{t}</Fit>
            <SortMark />
          </div>
        ))}
      </div>
      <div className={COLS + " h-[34px] items-center border-y-2 border-[#9da0a7]"}>
        {HEADERS.map(([t]) => (
          <div key={t} className="pl-[10px] pr-[11.5px]">
            <div className="flex h-[19px] items-center border border-[#e3e5ea] bg-white pl-[7px] text-[7px] leading-[10px] text-[#999]"><Fit w={9}>All</Fit></div>
          </div>
        ))}
      </div>
      <div className="relative flex">
        <div className="w-[912px] border-b border-[#87898d]">
          {DISTRICTS.map((d, i) => (
            <div key={d} className={(i % 2 ? "bg-white" : "bg-[#f9f9f9]") + " flex h-[20.5px] items-center border-b border-[#ececec] pl-[6px] text-[7px] leading-[10px]"}>
              <Fit w={29}>{d}</Fit>
            </div>
          ))}
        </div>
        {MASKS.map((m) => <div key={m} className={"absolute top-[2.5px] h-[199px] w-[30px] bg-black " + m} />)}
        <div className="absolute right-0 top-[10px] h-[217px] w-[1.5px] bg-[#b4b4b8]" />
      </div>
      <div className="flex h-[23.5px] items-center text-[7px] leading-[10px]">
        <Fit w={109.5}>Showing 1 to 10 of 1,255 entries</Fit>
        <div className="ml-[555.5px] flex items-center">
          <Fit w={30} className="text-[#888]">Previous</Fit>
          <div className="ml-[10px] flex h-[21px] w-[22px] items-center justify-center border border-[#bbb] bg-linear-to-b from-white to-[#dcdcdc] text-[7.5px]">1</div>
          {["2", "3", "4", "5"].map((n) => <div key={n} className="w-[23.3px] text-center text-[7.5px]">{n}</div>)}
          <div className="w-[23px] text-center font-['Liberation_Sans',sans-serif] text-[#999]">...</div>
          <div className="ml-[12px] w-[13px]"><Fit w={12}>126</Fit></div>
        </div>
        <div className="relative -top-[3px] ml-[8px] flex size-[27px] items-center justify-center rounded-full bg-[#f3f3f4]">
          <svg viewBox="0 0 10 10" className="size-[10px]"><path d="M5 0v10M0 5h10" stroke="#333" strokeWidth="2" /></svg>
        </div>
      </div>
    </section>
  );
}

/* ---------- sidebar filters ---------- */
const FILTERS: { label: [string, number][]; value: string; w: number }[] = [
  { label: [["Filtra por ciudad", 98]], value: "A Carballa, A Coruña, A Regueira", w: 181 },
  { label: [["Filtra por municipio", 117.5]], value: "A Coruña, Adeje, Agoncillo, Agüimes", w: 201 },
  { label: [["Filtra por distrito", 102]], value: "0101801, 0105901, 0200301,", w: 155.5 },
  { label: [["Filtra por número de camas", 163]], value: "0, 1, 2, 3, 4, 5, 6, 7, 8, 9, 10, 11", w: 161 },
  { label: [["Filtra por número de", 122], ["habitaciones", 77]], value: ">4, 0.0, 1.0, 2.0, 3.0, 4.0, nan", w: 154.5 },
];

function Caret({ className }: { className: string }) {
  return <svg viewBox="0 0 6 4" className={className}><path d="M0 0h6L3 4z" fill="#333" /></svg>;
}

function FilterPanel() {
  return (
    <div className={"flex h-[545px] w-[258px] overflow-hidden " + SRC}>
      <aside className="w-[221px] shrink-0 bg-[#222d32]">
        <div className="h-[47px] bg-[#eeae31] pl-[12px] pt-[6px]"><Logo className="h-[42px] w-[200px]" /></div>
        <div className="flex flex-col gap-[27px] pl-[14.5px] pt-[12.3px]">
          {FILTERS.map((f) => (
            <div key={f.value}>
              {f.label.map(([t, w]) => (
                <div key={t} className="h-[18.7px] text-[12px] font-black leading-[18.7px] text-white"><Fit w={w}>{t}</Fit></div>
              ))}
              <div className="mt-[4.3px] flex h-[31.7px] w-[193px] items-center bg-[#f4f4f4] pl-[12px] text-[12.5px] leading-[18px] text-[#5c5c5c]">
                <div className="w-[156px] shrink-0 overflow-hidden"><Fit w={f.w}>{f.value}</Fit></div>
                <Caret className="ml-[5px] h-[4px] w-[6px]" />
              </div>
            </div>
          ))}
        </div>
      </aside>
      <div className="flex w-[37px] flex-col overflow-hidden bg-[#aad3df]">
        <div className="flex h-[47px] shrink-0 items-center border-b border-l border-[#c5a55c] bg-[#367fa9] pl-[13px] text-white"><FaBars className="size-[13px]" /></div>
        <div className="h-[115px] shrink-0 bg-[#ebeef4] pt-[32px] text-[#444]">
          <div className="h-[30px] pl-[1px] text-[19.500px] leading-[28px]"><Fit w={38}>Sele</Fit></div>
          <div className="mt-[7px] flex h-[31px] items-center border-y border-[#e4e4e6] bg-[#f4f4f4] pl-[12px] text-[12.500px] leading-[18px] text-[#5c5c5c]"><Fit w={27}>Núm</Fit></div>
        </div>
        <div className="ml-[10px] mt-[10px] flex h-[60px] w-[34px] shrink-0 flex-col rounded-[3px] border-2 border-[#8fb0ba] bg-white">
          <div className="flex flex-1 items-center border-b border-[#ccc] pl-[8.500px]"><svg viewBox="0 0 11 11" className="size-[12px]"><path d="M5.5 0v11M0 5.5h11" stroke="#111" strokeWidth="1.8" /></svg></div>
          <div className="flex flex-1 items-center pl-[8.500px]"><svg viewBox="0 0 11 11" className="size-[12px]"><path d="M0 5.5h11" stroke="#111" strokeWidth="1.8" /></svg></div>
        </div>
        <div className="ml-[9.500px] mt-[11px] flex h-[25px] w-[24px] shrink-0 items-center justify-center rounded-[3px] bg-white shadow-[0_1px_4px_rgba(0,0,0,0.65)]"><FaSearch className="size-[15px] text-[#111]" /></div>
        <svg viewBox="0 0 18 24" className="ml-[13px] mt-[100px] h-[24px] w-[18px] shrink-0"><path d="M9 1.5C13 0 16.500 2 16.500 8C17 14 16 20 10 22.500C4 23.500 1 20 1.500 14.500C3 9 4.500 3 9 1.500Z" fill="#a6cbdb" stroke="#8fb0c8" strokeWidth="1.300" /><circle cx="9" cy="15" r="0.900" fill="#eef5f7" /></svg>
      </div>
    </div>
  );
}

export default function App() {
  return (
    <main className="flex h-[1080px] w-[1920px] overflow-hidden bg-[#fefefe] font-['Liberation_Sans',Arial,sans-serif] text-[#434343]">
      <div className="flex w-[887px] shrink-0 flex-col">
        <header className="ml-[38px] mt-[45px] flex h-[44px] w-[632px] items-start border-b-[3px] border-[#e5ae3c]">
          <h1 className="-ml-px text-[36px] leading-[40px]"><Fit w={434}>Seleccionar un distrito aquí</Fit></h1>
          <h2 className="ml-[54px] mt-[7px] font-[Roboto,sans-serif] text-[28px] font-light leading-[36px]"><Fit w={141}>Mapa de calor</Fit></h2>
        </header>

        <section className="ml-[37px] mt-[9px] flex h-[294px] w-[790px] flex-col bg-[#ebeef4]">
          <div className="flex h-[26px] items-start bg-[#eeae31] pl-[6.500px] pt-[3px] text-white">
            <Logo className="h-[22.700px] w-[108px]" />
            <FaBars className="ml-[12px] mt-[6.500px] size-[7.500px]" />
          </div>
          <div className={"h-[61px] pt-[14px] text-[#444] " + SRC}>
            <div className="h-[20px] text-[12.500px] leading-[20px]"><Fit w={323}>Selecciona en función de qué campo colorear el mapa de calor</Fit></div>
            <div className="mt-[3px] flex h-[17px] w-[154.500px] items-center justify-between border border-[#eaeaec] bg-[#f4f4f4] pl-[6px] pr-[6px] text-[6.800px] leading-[10px] text-[#666]">
              <Fit w={81}>Número de Oportunidades</Fit>
              <Caret className="h-[2.500px] w-[4px]" />
            </div>
          </div>
          <div className="relative h-[207px]">
            <HeatMap />
            <div className="absolute left-[5.500px] top-[6.500px] flex h-[31px] w-[17px] flex-col rounded-[2px] border border-[#cfcfcb] bg-white">
              <div className="flex flex-1 items-center justify-center border-b border-[#ddd]"><svg viewBox="0 0 6 6" className="size-[6px]"><path d="M3 0v6M0 3h6" stroke="#222" strokeWidth="1.200" /></svg></div>
              <div className="flex flex-1 items-center justify-center"><svg viewBox="0 0 6 6" className="size-[6px]"><path d="M0 3h6" stroke="#222" strokeWidth="1.200" /></svg></div>
            </div>
            <div className="absolute left-[4.500px] top-[43.500px] flex h-[13.500px] w-[14px] items-center justify-center rounded-[2px] bg-white shadow-[0_0_2px_rgba(0,0,0,0.5)]"><FaSearch className="size-[8px] text-[#111]" /></div>
          </div>
        </section>

        <div className="flex flex-1">
          <div className="w-[359px] shrink-0 pt-[74px]">
            <div className="ml-[45px] flex h-[284px] w-[281px] items-end border-b-[3px] border-l-[3px] border-[#e5ae3c] pb-[10px] pl-[13px]">
              <h2 className="text-[36px] leading-[40px]"><Fit w={265}>Lo actualiza aquí</Fit></h2>
            </div>
            <svg viewBox="0 0 11 12" className="relative -top-[7.500px] ml-[326px] h-[12px] w-[11px]"><path d="M0 0L11 6L0 12Z" fill="#e9ad35" /></svg>
          </div>
          <div className="w-[301px] shrink-0 pt-[36px]">
            <h2 className="flex h-[37px] justify-end pr-[9px] font-[Roboto,sans-serif] text-[28px] font-light leading-[37px] text-black"><Fit w={61}>Filtros</Fit></h2>
            <div className="h-[581px] rounded-[15px] border-[3px] border-[#e5ae3c] pl-[18px] pt-[14px]"><FilterPanel /></div>
          </div>
          <div className="pl-[12px] pt-[75px]">
            <svg viewBox="0 0 201 70" className="block h-[70px] w-[201px]"><path d="M0 18H166.700V0L201 35L166.700 70V52.500H0Z" fill="#edad31" /></svg>
          </div>
        </div>
      </div>

      <div className="w-[988px] shrink-0 pt-[23px]">
        <h1 className="h-[49px] pl-[28.500px] text-[36px] leading-[42px]"><Fit w={905}>Cualquier modificación en los filtros actualiza los gráficos</Fit></h1>
        <section className="h-[980px] rounded-[32px] border-[3px] border-[#e5ae3c] pl-[33px] pt-[75px]">
          <div className="flex h-[246px]">
            <RentChart />
            <div className="w-[17px] border-b border-white bg-[#ebeef4]" />
            <ProposalChart />
          </div>
          <div className="flex h-[247px]">
            <RoomsChart />
            <div className="w-[18px] bg-[#ebeef4]" />
            <ICalChart />
          </div>
          <Summary />
        </section>
      </div>
    </main>
  );
}
